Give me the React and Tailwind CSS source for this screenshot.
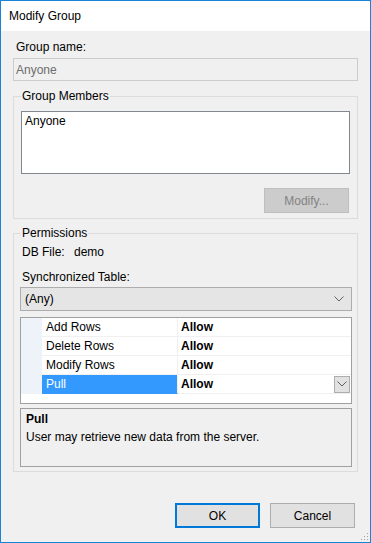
const rows = [
  { name: "Add Rows", value: "Allow" },
  { name: "Delete Rows", value: "Allow" },
  { name: "Modify Rows", value: "Allow" },
  { name: "Pull", value: "Allow", selected: true },
];

const Chevron = ({ className }) => (
  <svg className={className} width="10" height="6" viewBox="0 0 10 6" fill="none">
    <path d="M0.5 0.5 L5 5 L9.5 0.5" stroke="#606060" strokeWidth="1" />
  </svg>
);

const GroupBox = ({ title, className, children }) => (
  <fieldset className={`border border-[#dcdcdc] px-[7px] ${className}`}>
    <legend className="px-[1px] leading-[15px]">{title}</legend>
    {children}
  </fieldset>
);

const PropertyGrid = () => (
  <div className="-ml-px -mr-[2px] mt-[6px] h-[87px] border border-[#a0a0a0] bg-white">
    {rows.map((row) => (
      <div key={row.name} className="flex h-[19px]">
        <div className="w-[21px] shrink-0 bg-[#eef2f9]"></div>
        <div
          className={`flex w-[136px] shrink-0 items-center border-b border-r border-[#f0f0f0] pl-[4px] ${
            row.selected ? "border-b-[#3399ff] bg-[#3399ff] text-white" : ""
          }`}
        >
          {row.name}
        </div>
        <div className="flex flex-1 items-center border-b border-[#f0f0f0] pl-[3px] font-bold">
          <span className="flex-1">{row.value}</span>
          {row.selected && (
            <div className="mr-px flex h-[17px] w-[16px] items-center justify-center border border-[#adadad] bg-[#e1e1e1]">
              <Chevron />
            </div>
          )}
        </div>
      </div>
    ))}
  </div>
);

const ResizeGrip = () => (
  <svg width="10" height="10" viewBox="0 0 10 10" className="absolute bottom-[1px] right-[1px]">
    {[
      [8, 2],
      [5, 5],
      [8, 5],
      [2, 8],
      [5, 8],
      [8, 8],
    ].map(([x, y]) => (
      <rect key={`${x}-${y}`} x={x} y={y} width="1" height="1" fill="#a0a0a0" />
    ))}
  </svg>
);

export default function App() {
  return (
    <div
      className="relative flex h-[543px] w-[371px] flex-col border border-[#1883d7] bg-[#f0f0f0] text-[12px] text-black"
      style={{ fontFamily: '"Liberation Sans", Arial, sans-serif' }}
    >
      <div className="flex h-[30px] shrink-0 items-center bg-white pl-[8px]">Modify Group</div>

      <div className="flex flex-1 flex-col px-[12px]">
        <div className="mt-[9px] ml-[3px] leading-[15px]">Group name:</div>
        <div className="mt-[3px] flex h-[23px] items-center border border-[#cccccc] pl-[2px] text-[#6d6d6d]">
          Anyone
        </div>

        <GroupBox title="Group Members" className="mt-[8px] pb-[5px]">
          <div className="mt-[7px] h-[63px] border border-[#828790] bg-white pl-[3px] pt-[2px] leading-[15px]">
            Anyone
          </div>
          <div className="mt-[14px] flex justify-end">
            <button className="mr-px h-[25px] w-[85px] border border-[#bfbfbf] bg-[#cccccc] text-[#838383]">
              Modify...
            </button>
          </div>
        </GroupBox>

        <GroupBox title="Permissions" className="mt-[7px] pb-[4px]">
          <div className="mt-[4px] ml-px flex leading-[15px]">
            <span className="w-[52px]">DB File:</span>
            <span>demo</span>
          </div>
          <div className="mt-[10px] ml-px leading-[15px]">Synchronized Table:</div>
          <div className="-ml-px -mr-[2px] mt-[2px] flex h-[24px] items-center border border-[#adadad] bg-[#e5e5e5] pl-[4px] pr-[7px]">
            <span className="flex-1">(Any)</span>
            <Chevron />
          </div>
          <PropertyGrid />
          <div className="-ml-px -mr-[2px] mt-[4px] h-[59px] border border-[#a0a0a0] pl-[5px] pt-[3px] leading-[15px]">
            <div className="font-bold">Pull</div>
            <div className="mt-[3px]">User may retrieve new data from the server.</div>
          </div>
        </GroupBox>

        <div className="mr-[3px] mt-[31px] flex justify-end gap-[10px]">
          <button className="h-[25px] w-[85px] border-2 border-[#0078d7] bg-[#e1e1e1]">OK</button>
          <button className="h-[25px] w-[85px] border border-[#adadad] bg-[#e1e1e1]">Cancel</button>
        </div>
      </div>
      <ResizeGrip />
    </div>
  );
}
